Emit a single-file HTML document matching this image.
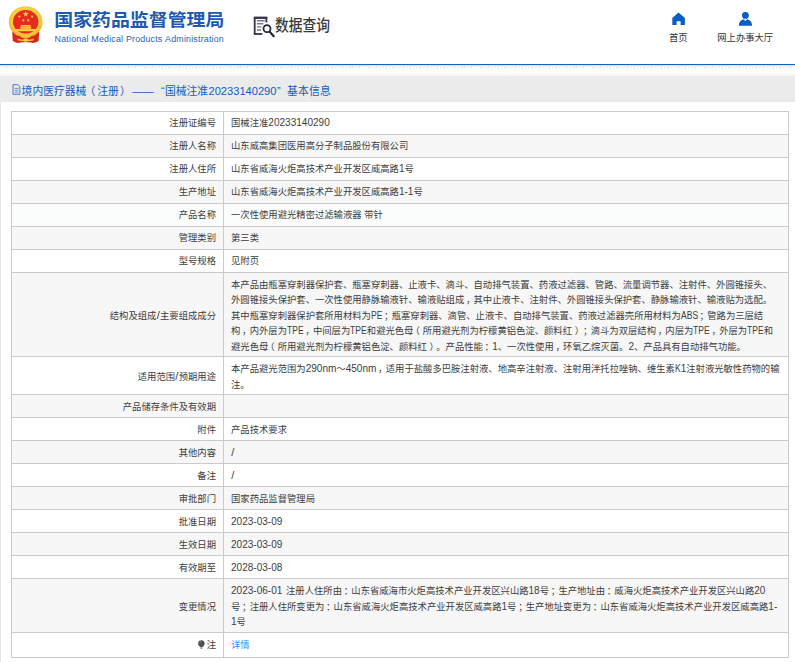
<!DOCTYPE html>
<html lang="zh-CN">
<head>
<meta charset="utf-8">
<title>国家药品监督管理局 数据查询</title>
<style>
html,body{margin:0;padding:0;}
body{width:795px;height:662px;position:relative;overflow:hidden;background:#fff;
 font-family:"Liberation Sans","Noto Sans CJK SC",sans-serif;color:#3d3d3d;text-spacing-trim:space-all;font-kerning:none;}
.abs{position:absolute;white-space:nowrap;}
#t1{left:54.3px;top:7.4px;font-size:18.9px;line-height:26px;font-weight:bold;color:#2059b0;transform-origin:0 50%;transform:scaleY(0.93);}
#t2{left:54.6px;top:33px;font-size:8.9px;line-height:12px;color:#2a5fb4;letter-spacing:0.19px;}
#q{left:274.8px;top:14px;font-size:14px;line-height:22px;color:#3a3a3a;font-weight:500;transform-origin:0 50%;transform:scale(0.985,1.13);}
.nav{font-size:9.3px;line-height:12px;color:#333;text-align:center;}
#n1{left:658.3px;width:40px;top:32px;}
#n2{left:705.2px;width:80px;top:32px;}
#hline{position:absolute;left:0;top:64px;width:795px;height:2px;background:linear-gradient(#1263c5 0,#1263c5 50%,#d3e2f5 50%,#d3e2f5 100%);}
#hatch{position:absolute;left:0;top:66px;width:795px;height:2px;
 background:repeating-linear-gradient(135deg,#e6e6e6 0,#e6e6e6 1px,#fff 1px,#fff 2.4px);}
#shade{position:absolute;left:0;top:68px;width:795px;height:8px;background:linear-gradient(#fff 0,#fff 55%,#f3f3f3 100%);}
#bar{position:absolute;left:0;top:76px;width:795px;height:26px;background:#ebebeb;}
#bartxt{left:21.6px;top:82.5px;font-size:10.8px;line-height:16px;color:#0f5cc0;}
#bartxt b{font-weight:normal;display:inline-block;}
#b1{margin-left:2.6px;}#b2{margin-left:7.3px;}#b3{margin-left:0.3px;}#b4{font-size:11.1px;margin-left:0.4px;}#b5{margin-left:0.5px;}#b6{margin-left:6.4px;letter-spacing:0.25px;}
#ledge{position:absolute;left:0;top:102px;width:1px;height:560px;background:#e6e6e6;}
#tb{position:absolute;left:11px;top:111px;width:778px;box-sizing:border-box;border-left:1px solid #cbcbcb;border-top:1px solid #cbcbcb;
 font-size:9.33px;line-height:15.4px;}
.tr{display:flex;height:23px;box-sizing:border-box;border-bottom:1px solid #cbcbcb;border-right:1px solid #cbcbcb;background:#fff;}
.tr.g{background:#f7f7f7;}
.l{width:212px;box-sizing:border-box;border-right:1px solid #cbcbcb;display:flex;align-items:center;justify-content:flex-end;padding-right:7px;white-space:nowrap;flex:none;}
.r{flex:1;display:flex;align-items:center;padding-left:7px;white-space:nowrap;}
.l>span,.r>span{position:relative;top:2px;}
.hi .l>span,.hi .r>span{top:1px;}
i{font-style:normal;line-height:0;}
i.pc{position:relative;left:1.7px;}i.pl{position:relative;left:-3px;}i.pr{position:relative;left:2.7px;}
i.sl{font-size:11px;padding:0 0.3px;}
i.n{font-size:10.05px;}
i.u{display:inline-block;font-size:10px;transform:scaleX(.853);transform-origin:0 50%;}
a{color:#1e90ff;text-decoration:none;}
</style>
</head>
<body>
<svg class="abs" style="left:0;top:0;width:60px;height:50px" viewBox="0 0 60 50">
 <defs>
  <radialGradient id="gold" cx="50%" cy="45%" r="55%"><stop offset="0.7" stop-color="#f9d247"/><stop offset="1" stop-color="#eeb128"/></radialGradient>
 </defs>
 <ellipse cx="25.7" cy="22" rx="16.9" ry="15.8" fill="url(#gold)"/>
 <path d="M12.2 31.5L16.5 35.2Q25.7 38.2 34.9 35.2L39.2 31.5L38.6 41Q34 43.6 31 42.6Q25.7 41.6 20.4 42.6Q17.4 43.6 12.8 41Z" fill="#d8261c"/>
 <ellipse cx="25.7" cy="21.8" rx="12.8" ry="11.8" fill="#e72b20"/>
 <path d="M25.7 10.9l.75 2.2h2.3l-1.85 1.4.7 2.2-1.9-1.35-1.9 1.35.7-2.2-1.85-1.4h2.3z" fill="#f7d23f"/>
 <g fill="#f4c838">
  <circle cx="19.4" cy="16.6" r="1.15"/><circle cx="32.1" cy="16.6" r="1.15"/>
  <circle cx="23.3" cy="20.4" r="1.15"/><circle cx="28.2" cy="20.4" r="1.15"/>
 </g>
 <path d="M21.2 25h9l.6 1.2h-10.2zM20.3 26.4h10.8v2.3H20.3zM16.2 28.9h19l.9 2.4H15.3z" fill="#f6cb3c"/>
 <ellipse cx="25.7" cy="36" rx="5.2" ry="2" fill="#f2c033"/>
 <path d="M17.5 38.6Q25.7 41.5 33.9 38.6L33.5 40.6Q25.7 42.2 17.9 40.6Z" fill="#f2c033"/>
 <ellipse cx="25.7" cy="39.8" rx="2.6" ry="1.6" fill="#f6cb3c"/>
</svg>
<div class="abs" id="t1">国家药品监督管理局</div>
<div class="abs" id="t2">National Medical Products Administration</div>
<svg class="abs" style="left:250px;top:12px;width:30px;height:30px" viewBox="250 12 30 30">
 <path d="M254.7 34V17.9H266.4V22.6" fill="none" stroke="#33334a" stroke-width="1.8"/>
 <path d="M253.8 17.7H267.3" stroke="#33334a" stroke-width="2.2"/>
 <path d="M253.8 34H262.4" stroke="#33334a" stroke-width="1.8"/>
 <path d="M256.9 20.8H264.8M256.9 23.8H263.4M256.9 26.9H261.4M256.9 30H261" stroke="#777784" stroke-width="1.4"/>
 <circle cx="267" cy="28.7" r="3.5" fill="#fff" stroke="#24243a" stroke-width="1.8"/>
 <path d="M269.9 31.9L273.7 36.2" stroke="#24243a" stroke-width="2.2" stroke-linecap="round"/>
</svg>
<div class="abs" id="q">数据查询</div>
<svg class="abs" style="left:668px;top:10px;width:20px;height:18px" viewBox="668 10 20 18">
 <path d="M678.5 12.6L684.9 18V25H680.6V21.3H676.6V25H672.3V18Z" fill="#0a5dc6"/>
</svg>
<div class="abs nav" id="n1">首页</div>
<svg class="abs" style="left:735px;top:10px;width:20px;height:18px" viewBox="735 10 20 18">
 <circle cx="745.4" cy="15.4" r="3.4" fill="#0a5dc6"/>
 <path d="M738.8 25.7Q739 20.3 744 19.3L745.4 21.2L746.8 19.3Q751.9 20.3 752.1 25.7Z" fill="#0a5dc6"/>
</svg>
<div class="abs nav" id="n2">网上办事大厅</div>
<div id="hline"></div><div id="hatch"></div><div id="shade"></div>
<div id="bar"></div>
<svg class="abs" style="left:10px;top:82px;width:14px;height:14px" viewBox="10 82 14 14">
 <path d="M13 84.7h4.8l2.1 2.1v7.5H13z" fill="none" stroke="#2e6fd0" stroke-width="0.9"/>
 <path d="M14.6 88.4h3.8M14.6 90.3h3.8M14.6 92.2h3.8" stroke="#2e6fd0" stroke-width="0.7"/>
</svg>
<div class="abs" id="bartxt">境内医疗器械<i style="position:relative;left:-2px">（</i>注册<i style="position:relative;left:1.3px">）</i><b id="b1">——</b><b id="b2">“</b><b id="b3">国械注准</b><b id="b4">20233140290</b><b id="b5">”</b><b id="b6">基本信息</b></div>
<div id="ledge"></div>
<div id="tb">
<div class="hi tr"><div class="l"><span>注册证编号</span></div><div class="r"><span>国械注准<i class="n">20233140290</i></span></div></div>
<div class="hi tr g"><div class="l"><span>注册人名称</span></div><div class="r"><span>山东威高集团医用高分子制品股份有限公司</span></div></div>
<div class="hi tr"><div class="l"><span>注册人住所</span></div><div class="r"><span>山东省威海火炬高技术产业开发区威高路<i class="n">1</i>号</span></div></div>
<div class="hi tr g"><div class="l"><span>生产地址</span></div><div class="r"><span>山东省威海火炬高技术产业开发区威高路<i class="n">1-1</i>号</span></div></div>
<div class="hi tr" style="background:#fbfdfd"><div class="l"><span>产品名称</span></div><div class="r"><span>一次性使用避光精密过滤输液器 带针</span></div></div>
<div class="hi tr g"><div class="l"><span>管理类别</span></div><div class="r"><span>第三类</span></div></div>
<div class="hi tr"><div class="l"><span>型号规格</span></div><div class="r"><span>见附页</span></div></div>
<div class="tr g" style="height:84px"><div class="l"><span>结构及组成<i class="sl">/</i>主要组成成分</span></div><div class="r"><span>本产品由瓶塞穿刺器保护套、瓶塞穿刺器、止液卡、滴斗、自动排气装置、药液过滤器、管路、流量调节器、注射件、外圆锥接头、<br>外圆锥接头保护套、一次性使用静脉输液针、输液贴组成<i class="pc">，</i>其中止液卡、注射件、外圆锥接头保护套、静脉输液针、输液贴为选配。<br>其中瓶塞穿刺器保护套所用材料为<i class="u" style="margin-right:-1.96px">PE</i><i class="pc">；</i>瓶塞穿刺器、滴管、止液卡、自动排气装置、药液过滤器壳所用材料为<i class="u" style="margin-right:-2.94px">ABS</i><i class="pc">；</i>管路为三层结<br>构<i class="pc">，</i>内外层为<i class="u" style="margin-right:-2.86px">TPE</i><i class="pc">，</i>中间层为<i class="u" style="margin-right:-2.86px">TPE</i>和避光色母<i class="pl">（</i>所用避光剂为柠檬黄铝色淀、颜料红<i class="pr">）</i><i class="pc">；</i>滴斗为双层结构<i class="pc">，</i>内层为<i class="u" style="margin-right:-2.86px">TPE</i><i class="pc">，</i>外层为<i class="u" style="margin-right:-2.86px">TPE</i>和<br>避光色母<i class="pl">（</i>所用避光剂为柠檬黄铝色淀、颜料红<i class="pr">）</i>。产品性能<i class="pc">：</i><i class="n">1</i>、一次性使用<i class="pc">，</i>环氧乙烷灭菌。<i class="n">2</i>、产品具有自动排气功能。</span></div></div>
<div class="tr" style="height:38px"><div class="l"><span>适用范围<i class="sl">/</i>预期用途</span></div><div class="r"><span>本产品避光范围为<i class="n">290nm</i>～<i class="n">450nm</i><i class="pc">，</i>适用于盐酸多巴胺注射液、地高辛注射液、注射用泮托拉唑钠、维生素<i class="u" style="margin-right:-0.98px">K</i><i class="n">1</i>注射液光敏性药物的输<br>注。</span></div></div>
<div class="tr g"><div class="l"><span>产品储存条件及有效期</span></div><div class="r"><span></span></div></div>
<div class="tr"><div class="l"><span>附件</span></div><div class="r"><span>产品技术要求</span></div></div>
<div class="tr g"><div class="l"><span>其他内容</span></div><div class="r"><span><i class="sl">/</i></span></div></div>
<div class="tr"><div class="l"><span>备注</span></div><div class="r"><span><i class="sl">/</i></span></div></div>
<div class="tr g"><div class="l"><span>审批部门</span></div><div class="r"><span>国家药品监督管理局</span></div></div>
<div class="tr"><div class="l"><span>批准日期</span></div><div class="r"><span><i class="n">2023-03-09</i></span></div></div>
<div class="tr g"><div class="l"><span>生效日期</span></div><div class="r"><span><i class="n">2023-03-09</i></span></div></div>
<div class="tr"><div class="l"><span>有效期至</span></div><div class="r"><span><i class="n">2028-03-08</i></span></div></div>
<div class="tr g" style="height:54px"><div class="l"><span>变更情况</span></div><div class="r"><span><i class="n">2023-06-01</i><i style="margin-left:1px"> </i>注册人住所由<i class="pc">：</i>山东省威海市火炬高技术产业开发区兴山路<i class="n">18</i>号<i class="pc">；</i>生产地址由<i class="pc">：</i>威海火炬高技术产业开发区兴山路<i class="n">20</i><br>号<i class="pc">；</i>注册人住所变更为<i class="pc">：</i>山东省威海火炬高技术产业开发区威高路<i class="n">1</i>号<i class="pc">；</i>生产地址变更为<i class="pc">：</i>山东省威海火炬高技术产业开发区威高路<i class="n">1-</i><br><i class="n">1</i>号</span></div></div>
<div class="hi tr" style="height:25px"><div class="l"><span><svg style="width:7px;height:9px;vertical-align:-1.2px;margin-right:1.2px" viewBox="0 0 7 9"><circle cx="3.4" cy="3.4" r="3.2" fill="#505055"/><path d="M1.6 5.6h3.6L4.5 7.3h-2.2z" fill="#505055"/><path d="M2.4 7.6h2v1.1h-2z" fill="#77777c"/><path d="M1.9 2.6q.3-1 1.3-1.2" stroke="#9ab" stroke-width=".6" fill="none"/></svg>注</span></div><div class="r"><span><a>详情</a></span></div></div>
</div>
</body>
</html>
